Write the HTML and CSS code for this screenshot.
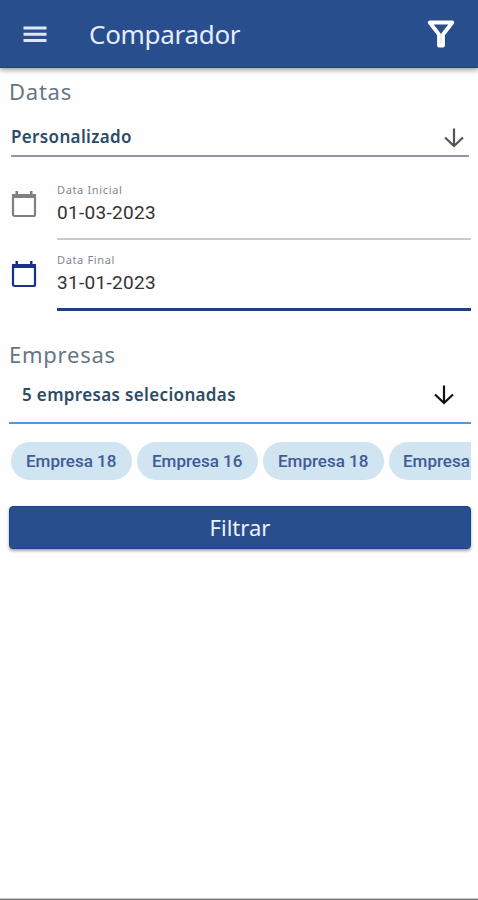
FILE: index.html
```html
<!DOCTYPE html>
<html lang="pt">
<head>
<meta charset="utf-8">
<title>Comparador</title>
<link rel="stylesheet" href="styles.css">
</head>
<body>
<header class="bar">
  <svg class="menu" viewBox="0 0 24 18"><path d="M0.5 3H23.5M0.5 9.2H23.5M0.5 15.4H23.5"/></svg>
  <h1><span>Comparador</span></h1>
  <svg class="funnel" viewBox="0 0 28 30"><path d="M2.7 3.5H25.3L16 15.5V26.5H12V15.5Z"/></svg>
</header>
<main>
  <h2 class="t-datas"><span>Datas</span></h2>
  <div class="select period"><span>Personalizado</span>
    <svg class="arrow" viewBox="0 0 20 20"><path d="M10 .5V18M1 9.5L10 18L19 9.5"/></svg>
  </div>
  <div class="date">
    <svg class="cal" viewBox="0 0 26 28"><path class="top" d="M1 4H25V8H1ZM4.5 1H7V5H4.5ZM19 1H21.5V5H19Z"/><rect x="2" y="5" width="22" height="21" rx="1.5"/></svg>
    <div class="field"><label><span>Data Inicial</span></label><div class="value"><span>01-03-2023</span></div></div>
  </div>
  <div class="date active">
    <svg class="cal" viewBox="0 0 26 28"><path class="top" d="M1 4H25V8H1ZM4.5 1H7V5H4.5ZM19 1H21.5V5H19Z"/><rect x="2" y="5" width="22" height="21" rx="1.5"/></svg>
    <div class="field"><label><span>Data Final</span></label><div class="value"><span>31-01-2023</span></div></div>
  </div>
  <h2 class="t-emp"><span>Empresas</span></h2>
  <div class="select companies"><span>5 empresas selecionadas</span>
    <svg class="arrow" viewBox="0 0 20 20"><path d="M10 .5V18M1 9.5L10 18L19 9.5"/></svg>
  </div>
  <div class="chips">
    <div class="chip"><span>Empresa 18</span></div>
    <div class="chip"><span>Empresa 16</span></div>
    <div class="chip"><span>Empresa 18</span></div>
    <div class="chip"><span>Empresa</span></div>
  </div>
  <button class="filter"><span>Filtrar</span></button>
</main>
<div class="bottom"></div>
</body>
</html>
```
FILE: styles.css
```css
* { box-sizing: border-box; }
body {
  margin: 0;
  height: 900px;
  overflow: hidden;
  display: flex;
  flex-direction: column;
  background: #fefefe;
  font-family: "Noto Sans", "Open Sans", sans-serif;
}
svg { display: block; flex: none; fill: none; }
h1, h2 { margin: 0; font-weight: 400; white-space: nowrap; }

.bar {
  height: 68px;
  flex: none;
  display: flex;
  align-items: center;
  padding: 0 23px;
  background: #284e8e;
  border-bottom: 1px solid #1c4282;
  box-shadow: 0 2px 5px rgba(0, 0, 0, .4);
}
.menu { width: 24px; height: 18px; stroke: #dfe7f6; stroke-width: 3; }
.bar h1 { margin-left: 42px; flex: 1; font-size: 26px; line-height: 36px; letter-spacing: -.3px; color: #e6edfa; padding-top: 1px; }
.funnel { width: 28px; height: 30px; stroke: #fff; stroke-width: 3.8; stroke-linejoin: round; }

main { flex: 1; padding: 0 7px 0 9px; }
h2 { font-size: 22px; line-height: 30px; color: #667685; letter-spacing: .75px; }
.t-datas { padding-top: 8px; height: 50px; }
.select { display: flex; justify-content: space-between; color: #2c4c65; font-weight: 600; font-size: 17px; letter-spacing: .35px; }
.arrow { width: 20px; height: 20px; stroke: #555; stroke-width: 2.2; }
.period {
  height: 39px;
  margin: 0 2px;
  padding: 7px 5px 0 0;
  line-height: 24px;
  border-bottom: 2px solid #9097a6;
}
.period .arrow { margin-top: 3px; }
.date { display: flex; height: 70px; }
.period + .date { margin-top: 13px; }
.cal { width: 26px; height: 28px; margin: 20px 20px 0 2px; stroke: #808080; stroke-width: 2.2; }
.top { fill: #808080; stroke: none; }
.field {
  flex: 1;
  display: flex;
  flex-direction: column;
  border-bottom: 2px solid #c9cacb;
}
label { margin-top: 12px; font-size: 11px; line-height: 16px; color: #7e8791; letter-spacing: .65px; }
.value { font-family: Roboto, sans-serif; font-size: 19px; line-height: 26px; margin-top: 2px; color: #333; letter-spacing: .3px; }
.active { height: 71px; }
.active .cal { stroke: #17308a; }
.active .top { fill: #17308a; }
.active .field { border-bottom: 3px solid #213d88; }
.t-emp { padding-top: 28px; height: 69px; }
.companies {
  height: 44px;
  padding: 3px 17px 0 13px;
  line-height: 24px;
  border-bottom: 2px solid #4d9ae0;
}
.companies .arrow { margin-top: 2px; stroke: #111; }
.chips { display: flex; gap: 5px; margin: 18px 0 0 2px; overflow: hidden; }
.chip {
  flex: none;
  width: 121px;
  height: 38px;
  padding-left: 15px;
  border-radius: 19px;
  background: #d0e4f2;
  color: #3f5b96;
  font: 500 17px/38px Roboto, sans-serif;
  white-space: nowrap;
}
.chip:last-child { width: 82px; padding-left: 14px; border-radius: 19px 0 0 19px; }
.filter {
  display: block;
  width: 100%;
  height: 43px;
  margin-top: 26px;
  padding: 0;
  border: 1px solid #1c4282;
  border-radius: 4px;
  background: #284e8e;
  color: #eef3fc;
  font: 400 22px/41px "Noto Sans", sans-serif;
  box-shadow: 0 2px 3px rgba(0, 0, 0, .35);
}
.bottom { height: 2px; flex: none; background: #777; border-top: 1px solid #ccc; }
```
